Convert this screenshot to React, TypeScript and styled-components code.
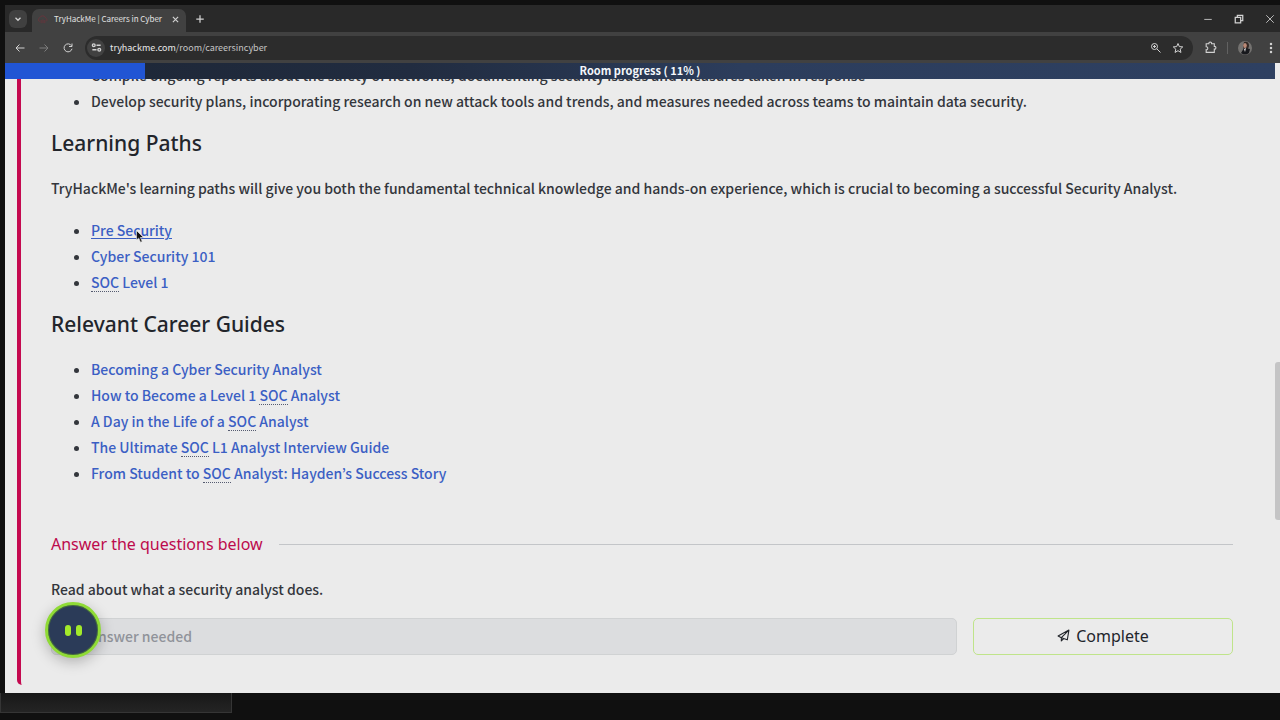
import React from "react";
import styled, { createGlobalStyle } from "styled-components";

const GlobalStyle = createGlobalStyle`
  * { box-sizing: border-box; }
  body {
    margin: 0;
    background: #101010;
    color: #33363c;
    font-family: "Noto Sans CJK KR", "Noto Sans", sans-serif;
    font-size: 14px;
    font-weight: 500;
    line-height: 26px;
  }
  button, input { font: inherit; }
`;

const uiFont = `"Noto Sans CJK KR", "Noto Sans", sans-serif`;
const headingFont = `"Noto Sans", "Open Sans", sans-serif`;

const Desktop = styled.div`
  min-height: 100vh;
  overflow: hidden;
`;

const BrowserWindow = styled.div`
  margin: 5px 0 0 5px;
  background: #ebebeb;
`;

const TabStrip = styled.header`
  display: flex;
  align-items: center;
  height: 27px;
  padding: 0 5px 0 4px;
  background: #292929;
  font-family: ${uiFont};
  font-weight: 400;
`;

const IconButton = styled.button<{ $size?: number; $fill?: string; $dim?: boolean }>`
  display: flex;
  flex: none;
  align-items: center;
  justify-content: center;
  width: ${(p) => p.$size ?? 18}px;
  height: ${(p) => p.$size ?? 18}px;
  padding: 0;
  border: 0;
  border-radius: 6px;
  background: ${(p) => p.$fill ?? "transparent"};
  color: ${(p) => (p.$dim ? "#7c7c7c" : "#d2d2d2")};
`;

const Tab = styled.div`
  display: flex;
  align-items: center;
  align-self: flex-end;
  width: 154px;
  height: 23px;
  margin-left: 5px;
  padding: 0 2px 3px 5px;
  border-radius: 7px 7px 0 0;
  background: #414141;
  color: #e2e2e2;
  font-size: 8px;
  line-height: 16px;
  white-space: nowrap;
`;

const TabTitle = styled.span`
  flex: 1;
  margin-left: 6px;
`;

const NewTab = styled.div`
  margin-left: 5px;
`;

const WindowControls = styled.div`
  display: flex;
  gap: 13px;
  margin-left: auto;
  margin-right: -4px;
`;

const Toolbar = styled.div`
  display: flex;
  align-items: center;
  height: 31px;
  padding: 0 0 0 6px;
  background: #414141;
  font-family: ${uiFont};
  font-weight: 400;
`;

const NavButtons = styled.div`
  display: flex;
  gap: 6px;
`;

const AddressBar = styled.div`
  display: flex;
  flex: 1;
  align-items: center;
  height: 24px;
  margin: 0 8px 0 8px;
  padding: 0 6px 0 2px;
  border-radius: 12px;
  background: #2c2c2c;
`;

const SiteInfo = styled(IconButton)`
  border-radius: 50%;
  background: #414141;
`;

const Address = styled.span`
  flex: 1;
  margin-left: 5px;
  color: #c4c4c4;
  font-size: 9px;
  line-height: 16px;

  b { color: #e8e8e8; font-weight: 400; }
`;

const AddressActions = styled.div`
  display: flex;
  gap: 4px;
`;

const ToolbarEnd = styled.div`
  display: flex;
  align-items: center;
  gap: 8px;
`;

const Separator = styled.span`
  width: 1px;
  height: 12px;
  background: #626262;
`;

const Viewport = styled.div`
  position: relative;
  overflow: hidden;
  padding: 0 0 8px 12px;
`;

const ProgressBar = styled.div`
  position: absolute;
  top: 0;
  left: 0;
  right: 5px;
  height: 16px;
  background: linear-gradient(90deg, #1d2635 0, #212c40 32%, #2c3d5c 58%, #2e4061 100%);
  color: #f4f7fb;
  font-size: 11px;
  font-weight: 700;
  line-height: 15px;
  text-align: center;
`;

const ProgressFill = styled.div`
  position: absolute;
  inset: 0 auto 0 0;
  background: #2155d4;
`;

const ScrollThumb = styled.div`
  position: absolute;
  top: 47.5%;
  right: 0;
  width: 5px;
  height: 25%;
  border-radius: 3px 0 0 3px;
  background: #c4c4c5;
`;

const Task = styled.main`
  margin-top: -1px;
  padding: 0 47px 30px 30px;
  border-left: 4px solid #c4094f;
  border-bottom-left-radius: 5px;
`;

const List = styled.ul`
  margin: 0;
  padding: 0 0 0 40px;
`;

const Heading = styled.h3`
  margin: 12px 0 15px;
  color: #22252b;
  font-family: ${headingFont};
  font-size: 21px;
  font-weight: 500;
  line-height: 34px;
`;

const Text = styled.p`
  margin: 0 0 16px;
`;

const Link = styled.a<{ $hovered?: boolean }>`
  position: relative;
  color: #3b5fc4;
  text-decoration: ${(p) => (p.$hovered ? "underline" : "none")};
  text-underline-offset: 2px;
`;

const Abbr = styled.abbr`
  border-bottom: 1px dotted #555b70;
  text-decoration: none;
  display: inline-block;
  line-height: 18px;
`;

const Pointer = styled.svg`
  position: absolute;
  top: 10px;
  left: 45px;
`;

const Questions = styled.section`
  padding-top: 45px;
`;

const QuestionsTitle = styled.h4`
  display: flex;
  align-items: center;
  gap: 16px;
  margin: 0 0 19px;
  color: #bd0a4c;
  font-family: ${headingFont};
  font-size: 16px;
  font-weight: 400;
  line-height: 26px;

  &::after {
    content: "";
    flex: 1;
    height: 1px;
    background: #c3c5c8;
  }
`;

const AnswerRow = styled.form`
  display: flex;
  gap: 16px;
`;

const QuestionLabel = styled.label`
  display: block;
  margin-bottom: 16px;
`;

const AnswerInput = styled.input`
  flex: 1;
  min-width: 0;
  height: 37px;
  padding: 0 16px 2px;
  border: 1px solid #d0d2d3;
  border-radius: 5px;
  background: #dcdddf;

  &::placeholder { color: #90939a; opacity: 1; }
`;

const CompleteButton = styled.button`
  display: flex;
  align-items: center;
  justify-content: center;
  gap: 6px;
  width: 260px;
  height: 37px;
  padding: 0 0 2px;
  border: 1px solid #bfe48a;
  border-radius: 5px;
  background: transparent;
  color: #22252b;
  font-family: ${headingFont};
  font-size: 16px;
  font-weight: 400;
`;

const Assistant = styled.button`
  position: absolute;
  left: 40px;
  bottom: 35px;
  display: flex;
  align-items: center;
  justify-content: center;
  gap: 5px;
  width: 56px;
  height: 56px;
  padding: 0;
  border: 3px solid #8fdb35;
  border-radius: 50%;
  background: #2b3b58;
  box-shadow: 0 4px 14px rgba(0, 0, 0, 0.25), inset 0 0 0 1px #456b3e;
`;

const Eye = styled.span`
  width: 6px;
  height: 11px;
  border-radius: 3px;
  background: #a3ea2a;
`;

const StatusPanel = styled.div`
  width: 232px;
  height: 20px;
  border: 1px solid #353535;
  border-width: 0 1px 1px;
  background: linear-gradient(#181818, #242424);
`;

type IconProps = { size?: number; width?: number; children: React.ReactNode };

const Icon = ({ size = 12, width = 2, children }: IconProps) => (
  <svg width={size} height={size} viewBox="0 0 24 24" fill="none" stroke="currentColor" strokeWidth={width} aria-hidden="true">
    {children}
  </svg>
);

const Soc = () => <Abbr title="Security Operations Center">SOC</Abbr>;

export default function App() {
  return (
    <Desktop>
      <GlobalStyle />
      <BrowserWindow>
        <TabStrip>
          <IconButton $fill="#404040" aria-label="Search tabs">
            <Icon size={10} width={3}><path d="M6 9l6 6 6-6" /></Icon>
          </IconButton>
          <Tab>
            <Icon size={11}>
              <path d="M6 17a5 5 0 0 1 0-9 7 7 0 0 1 13 1 4 4 0 0 1 1 7M9 13v7M13 12v8M17 13v7" stroke="#68343c" />
            </Icon>
            <TabTitle>TryHackMe | Careers in Cyber</TabTitle>
            <IconButton aria-label="Close tab">
              <Icon size={9} width={3}><path d="M5 5l14 14M19 5L5 19" /></Icon>
            </IconButton>
          </Tab>
          <NewTab>
            <IconButton aria-label="New tab">
              <Icon size={10} width={3}><path d="M12 3v18M3 12h18" /></Icon>
            </IconButton>
          </NewTab>
          <WindowControls>
            <IconButton aria-label="Minimize"><Icon size={10}><path d="M3 13h18" /></Icon></IconButton>
            <IconButton aria-label="Restore">
              <Icon size={10} width={3}><path d="M3 8h13v13H3zM8 8V3h13v13h-5" /></Icon>
            </IconButton>
            <IconButton aria-label="Close"><Icon size={10}><path d="M3 3l18 18M21 3L3 21" /></Icon></IconButton>
          </WindowControls>
        </TabStrip>
        <Toolbar>
          <NavButtons>
            <IconButton aria-label="Back"><Icon><path d="M21 12H4M11 5l-7 7 7 7" /></Icon></IconButton>
            <IconButton aria-label="Forward" $dim><Icon><path d="M3 12h17M13 5l7 7-7 7" /></Icon></IconButton>
            <IconButton aria-label="Reload">
              <Icon><path d="M19 7.500a8 8 0 1 0 1 6M20 3v6h-6" /></Icon>
            </IconButton>
          </NavButtons>
          <AddressBar>
            <SiteInfo $size={18} aria-label="Site information">
              <Icon size={11} width={3}>
                <circle cx="6" cy="7" r="3" /><path d="M12 7h9M3 17h9" /><circle cx="18" cy="17" r="3" />
              </Icon>
            </SiteInfo>
            <Address><b>tryhackme.com</b>/room/careersincyber</Address>
            <AddressActions>
              <IconButton aria-label="Zoom">
                <Icon><circle cx="9" cy="9" r="6" /><path d="M14 14l7 7M9 6v6M6 9h6" /></Icon>
              </IconButton>
              <IconButton aria-label="Bookmark">
                <Icon><path d="M12 3l2.700 6.200 6.800.6-5.100 4.500 1.500 6.600L12 17.400 6.100 20.900l1.500-6.600L2.500 9.800l6.800-.6z" /></Icon>
              </IconButton>
            </AddressActions>
          </AddressBar>
          <ToolbarEnd>
            <IconButton aria-label="Extensions">
              <Icon size={13}><path d="M4 5h5c-.5-4 5.500-4 5 0h5v5c4-.5 4 5.500 0 5v6H4v-5c4 .5 4-6 0-5.500z" /></Icon>
            </IconButton>
            <Separator />
            <IconButton aria-label="Profile">
              <svg width="14" height="14" viewBox="0 0 14 14" aria-hidden="true">
                <circle cx="7" cy="7" r="7" fill="#747270" />
                <path d="M6 1q5-1 5 4l-1 3-3 3-2-5z" fill="#322925" />
                <ellipse cx="7" cy="4.500" rx="1.800" ry="2.500" fill="#bb8976" />
                <path d="M3 12l3-5 6 1-1 4q-4 3-8 0z" fill="#18191d" />
                <path d="M6 8l2-1-1 4z" fill="#e6e6e6" />
              </svg>
            </IconButton>
            <IconButton aria-label="Menu">
              <Icon><g fill="currentColor" stroke="none"><circle cx="12" cy="4" r="2.500" /><circle cx="12" cy="12" r="2.500" /><circle cx="12" cy="20" r="2.500" /></g></Icon>
            </IconButton>
          </ToolbarEnd>
        </Toolbar>
        <Viewport>
          <Task>
            <List>
              <li>Compile ongoing reports about the safety of networks, documenting security issues and measures taken in response</li>
              <li>Develop security plans, incorporating research on new attack tools and trends, and measures needed across teams to maintain data security.</li>
            </List>
            <Heading>Learning Paths</Heading>
            <Text>TryHackMe's learning paths will give you both the fundamental technical knowledge and hands-on experience, which is crucial to becoming a successful Security Analyst.</Text>
            <List>
              <li>
                <Link href="#pre-security" $hovered>
                  Pre Security
                  <Pointer width="9" height="13" viewBox="0 0 9 13" aria-hidden="true">
                    <path d="M.5.5v9.500l2.200-2 1.800 4.200 1.700-.7-1.800-4h3.100z" fill="#111" stroke="#eee" strokeWidth=".6" />
                  </Pointer>
                </Link>
              </li>
              <li><Link href="#cyber-security-101">Cyber Security 101</Link></li>
              <li><Link href="#soc-level-1"><Soc /> Level 1</Link></li>
            </List>
            <Heading>Relevant Career Guides</Heading>
            <List>
              <li><Link href="#becoming">Becoming a Cyber Security Analyst</Link></li>
              <li><Link href="#level-1">How to Become a Level 1 <Soc /> Analyst</Link></li>
              <li><Link href="#day">A Day in the Life of a <Soc /> Analyst</Link></li>
              <li><Link href="#interview">The Ultimate <Soc /> L1 Analyst Interview Guide</Link></li>
              <li><Link href="#story">From Student to <Soc /> Analyst: Hayden’s Success Story</Link></li>
            </List>
            <Questions>
              <QuestionsTitle>Answer the questions below</QuestionsTitle>
              <QuestionLabel htmlFor="answer">Read about what a security analyst does.</QuestionLabel>
              <AnswerRow>
                <AnswerInput id="answer" placeholder="No answer needed" disabled />
                <CompleteButton type="button">
                  <Icon size={13}><path d="M22 2L2 13l6 3zM22 2L8 16v6l4-4M22 2l-3 18-11-4" strokeLinejoin="round" /></Icon>
                  Complete
                </CompleteButton>
              </AnswerRow>
            </Questions>
          </Task>
          <ProgressBar>
            <ProgressFill style={{ width: "11%" }} />
            Room progress ( 11% )
          </ProgressBar>
          <ScrollThumb />
          <Assistant aria-label="Open assistant"><Eye /><Eye /></Assistant>
        </Viewport>
      </BrowserWindow>
      <StatusPanel />
    </Desktop>
  );
}
